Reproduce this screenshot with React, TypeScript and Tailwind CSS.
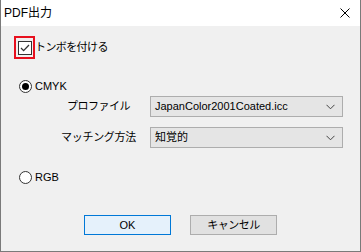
import React from "react";

const font = { fontFamily: '"Liberation Sans", "Noto Sans CJK JP", sans-serif' };

function Radio({ checked }: { checked: boolean }) {
  return (
    <svg width="13" height="13" viewBox="0 0 13 13" className="shrink-0">
      <circle cx="6.5" cy="6.5" r="6" fill="#ffffff" stroke="#333333" strokeWidth="1" />
      {checked && <circle cx="6.5" cy="6.5" r="3.5" fill="#000000" />}
    </svg>
  );
}

function Chevron() {
  return (
    <svg width="9" height="6" viewBox="0 0 9 6" className="shrink-0">
      <polyline points="0.5,0.8 4.5,4.8 8.5,0.8" fill="none" stroke="#444444" strokeWidth="1" />
    </svg>
  );
}

function Select({ value }: { value: string }) {
  return (
    <div className="w-[193px] h-[21px] border border-[#adadad] bg-[#e5e5e5] flex items-center justify-between pl-[4px] pr-[7px]">
      <span className="text-[11px] text-black leading-none">{value}</span>
      <Chevron />
    </div>
  );
}

export default function App() {
  return (
    <div
      style={font}
      className="w-[361px] h-[252px] bg-[#f0f0f0] border-l border-r border-b border-[#7a7a7a] flex flex-col text-black"
    >
      <div className="h-[26px] bg-white flex items-center justify-between pl-[3px] pr-[10px]">
        <span className="text-[12px] leading-none">PDF出力</span>
        <svg width="10" height="10" viewBox="0 0 10 10">
          <line x1="0.5" y1="0.5" x2="9.5" y2="9.5" stroke="#000" strokeWidth="1" />
          <line x1="9.5" y1="0.5" x2="0.5" y2="9.5" stroke="#000" strokeWidth="1" />
        </svg>
      </div>

      <div className="flex flex-col">
        <div className="mt-[10px] h-[23px] flex items-center pl-[13px]">
          <div className="w-[21px] h-[23px] border-2 border-[#e8101e] flex items-center justify-center">
            <div className="w-[14px] h-[14px] border border-[#333333] bg-white flex items-center justify-center">
              <svg width="12" height="12" viewBox="0 0 12 12">
                <polyline points="2,6 4.6,8.6 10,3" fill="none" stroke="#333333" strokeWidth="1.3" />
              </svg>
            </div>
          </div>
          <span className="text-[11px] leading-none tracking-[-0.6px]">トンボを付ける</span>
        </div>

        <div className="mt-[20px] h-[14px] flex items-center pl-[18px] gap-[3px]">
          <Radio checked />
          <span className="text-[11px] leading-none">CMYK</span>
        </div>

        <div className="mt-[3px] h-[21px] flex items-center pl-[49px]">
          <div className="w-[97px] flex justify-center">
            <span className="text-[11px] leading-none tracking-[-0.5px]">プロファイル</span>
          </div>
          <div className="ml-[3px]">
            <Select value="JapanColor2001Coated.icc" />
          </div>
        </div>

        <div className="mt-[10px] h-[21px] flex items-center pl-[49px]">
          <div className="w-[97px] flex justify-center">
            <span className="text-[11px] leading-none tracking-[-0.3px]">マッチング方法</span>
          </div>
          <div className="ml-[3px]">
            <Select value="知覚的" />
          </div>
        </div>

        <div className="mt-[22px] h-[14px] flex items-center pl-[18px] gap-[3px]">
          <Radio checked={false} />
          <span className="text-[11px] leading-none">RGB</span>
        </div>

        <div className="mt-[31px] flex pl-[83px] gap-[19px]">
          <button className="w-[87px] h-[20px] border border-[#0078d7] bg-[#e5f1fb] text-[11px] leading-none flex items-center justify-center">
            OK
          </button>
          <button className="w-[87px] h-[20px] border border-[#adadad] bg-[#e1e1e1] text-[11px] leading-none flex items-center justify-center tracking-[-0.5px]">
            キャンセル
          </button>
        </div>
      </div>
    </div>
  );
}
